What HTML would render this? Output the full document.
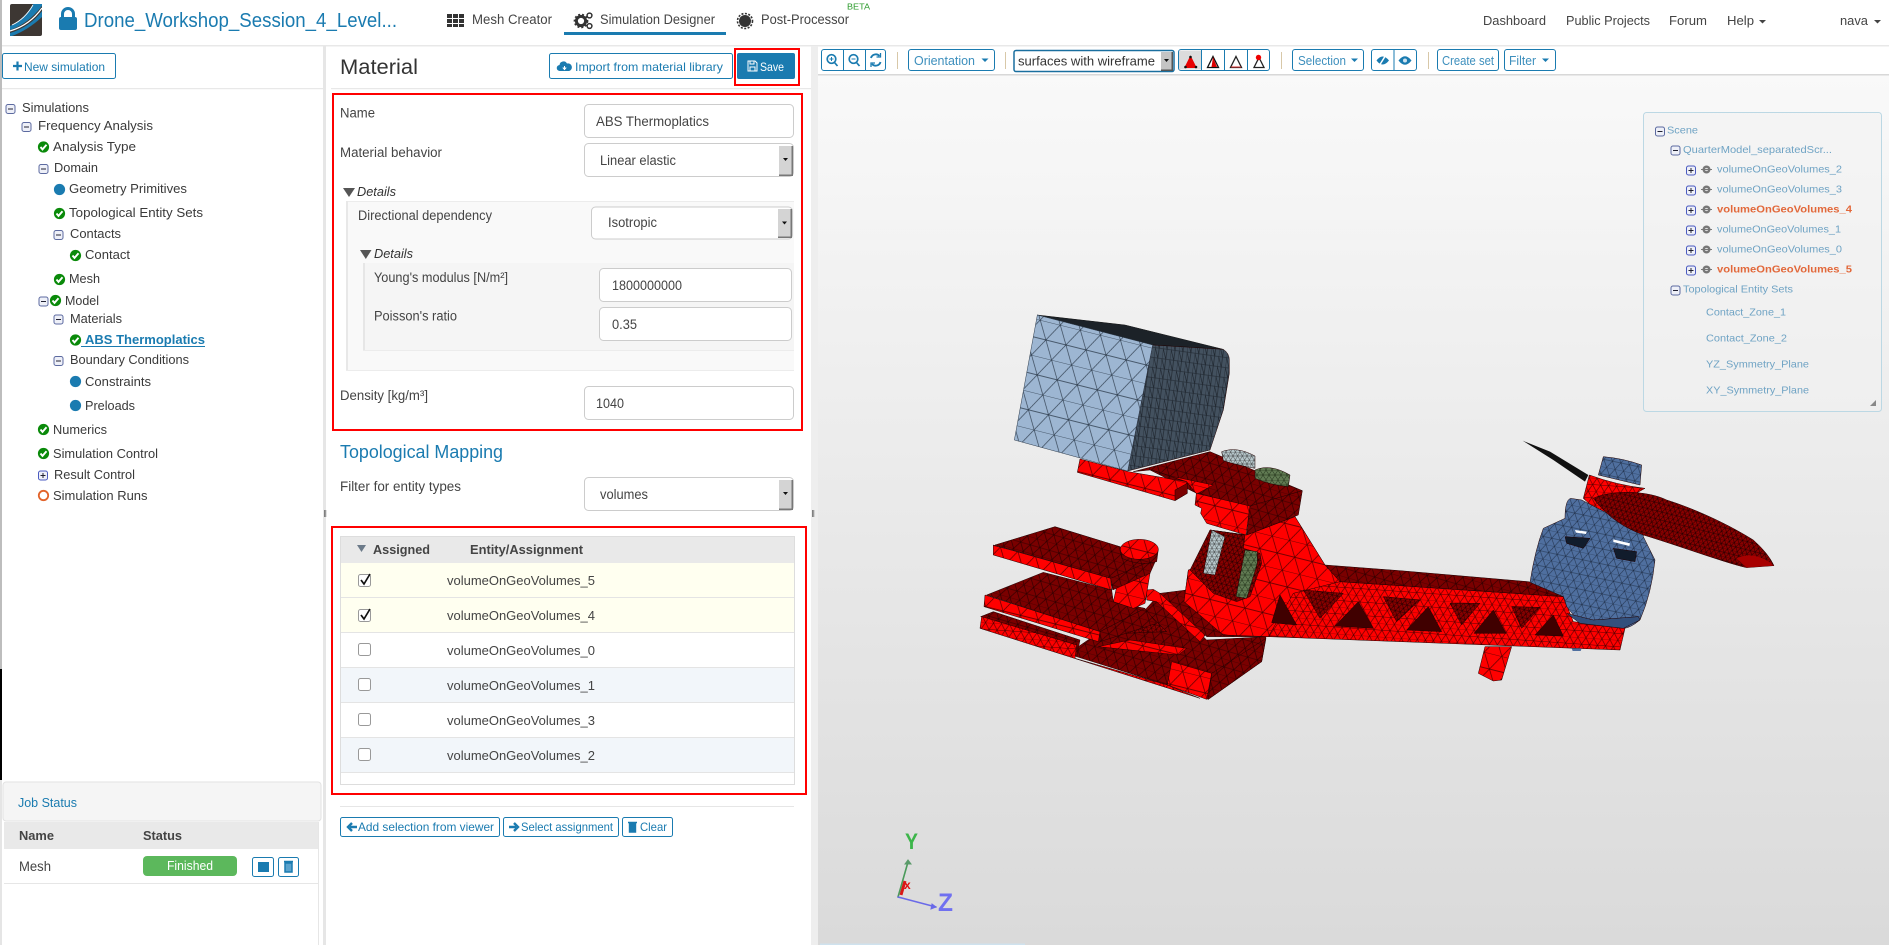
<!DOCTYPE html>
<html lang="en"><head><meta charset="utf-8"><title>Material - Simulation Designer</title>
<style>
html,body{margin:0;padding:0;background:#fff;overflow:hidden}
svg{display:block}
text{font-family:"Liberation Sans",sans-serif;fill:#444;white-space:pre}
.b{fill:#1a7bb0}.lb{font-size:13.5px}.tr{font-size:13px;fill:#3a3a3a}
.btn{font-size:12px;fill:#1a7bb0}.tb{font-size:12.5px;fill:#3d8fbd}
.sc{font-size:10.5px;fill:#6fa3c4}.or{font-size:10.5px;fill:#e2683a;font-weight:bold}
.hd{font-weight:bold;font-size:13px;fill:#444}
.inp{fill:#fff;stroke:#ccc;stroke-width:1}
.bb{fill:#fff;stroke:#1a7bb0;stroke-width:1}
.red{fill:none;stroke:#f00;stroke-width:2}
</style></head><body>
<svg xmlns="http://www.w3.org/2000/svg" width="1889" height="945" viewBox="0 0 1889 945">
<defs>
<linearGradient id="vg" x1="0" y1="0" x2="0" y2="1"><stop offset="0" stop-color="#f9f9f9"/><stop offset="1" stop-color="#dadada"/></linearGradient>
<pattern id="mr" width="54" height="92" patternUnits="userSpaceOnUse" patternTransform="rotate(14)"><rect width="54" height="92" fill="#f00"/><path d="M0 0H54M0 46H54M0 0L27 46L54 0M0 92L27 46L54 92" stroke="#4a0000" stroke-width="2" fill="none"/></pattern>
<pattern id="mf" width="24" height="40" patternUnits="userSpaceOnUse" patternTransform="rotate(4)"><rect width="24" height="40" fill="#f00"/><path d="M0 0H24M0 20H24M0 0L12 20L24 0M0 40L12 20L24 40" stroke="#500000" stroke-width="1.800" fill="none"/></pattern>
<pattern id="md" width="30" height="48" patternUnits="userSpaceOnUse" patternTransform="rotate(16)"><rect width="30" height="48" fill="#7a0000"/><path d="M0 0H30M0 24H30M0 0L15 24L30 0M0 48L15 24L30 48" stroke="#2a0000" stroke-width="1.800" fill="none"/></pattern>
<pattern id="mdf" width="15" height="24" patternUnits="userSpaceOnUse" patternTransform="rotate(14)"><rect width="15" height="24" fill="#8a0000"/><path d="M0 0H15M0 12H15M0 0L7.500 12L15 0M0 24L7.500 12L15 24" stroke="#200000" stroke-width="1.600" fill="none"/></pattern>
<pattern id="bl" width="62" height="108" patternUnits="userSpaceOnUse" patternTransform="rotate(14)"><rect width="62" height="108" fill="#9db6d2"/><path d="M0 0H62M0 54H62M0 0L31 54L62 0M0 108L31 54L62 108" stroke="#2c3a4a" stroke-width="2" fill="none"/></pattern>
<pattern id="sl" width="24" height="30" patternUnits="userSpaceOnUse" patternTransform="rotate(8)"><rect width="24" height="30" fill="#43515f"/><path d="M0 0H24M0 30H24M0 0V30M12 0V30M0 0L12 30" stroke="#1a2028" stroke-width="1.800" fill="none"/></pattern>
<pattern id="mb" width="26" height="44" patternUnits="userSpaceOnUse" patternTransform="rotate(12)"><rect width="26" height="44" fill="#4f6f9f"/><path d="M0 0H26M0 22H26M0 0L13 22L26 0M0 44L13 22L26 44" stroke="#1d2c44" stroke-width="1.500" fill="none"/></pattern>
<pattern id="gy" width="14" height="24" patternUnits="userSpaceOnUse"><rect width="14" height="24" fill="#b6c6ca"/><path d="M0 0H14M0 12H14M0 0L7 12L14 0M0 24L7 12L14 24" stroke="#333" stroke-width="1.400" fill="none"/></pattern>
<pattern id="gn" width="18" height="30" patternUnits="userSpaceOnUse"><rect width="18" height="30" fill="#607a52"/><path d="M0 0H18M0 15H18M0 0L9 15L18 0M0 30L9 15L18 30" stroke="#1c2a14" stroke-width="1.500" fill="none"/></pattern>
<symbol id="chk" overflow="visible"><circle r="5.600" fill="#0a8a0a"/><path d="M-3 0L-1 2.400L3-2.200" stroke="#fff" stroke-width="1.900" fill="none"/></symbol>
<symbol id="mn" overflow="visible"><rect x="-4.500" y="-4.500" width="9" height="9" rx="2" fill="#eef0f8" stroke="#5c6aa0"/><path d="M-2.500 0H2.500" stroke="#223" stroke-width="1"/></symbol>
<symbol id="pl" overflow="visible"><rect x="-4.500" y="-4.500" width="9" height="9" rx="2" fill="#eef0f8" stroke="#4a5ac0"/><path d="M-2.500 0H2.500M0-2.500V2.500" stroke="#223" stroke-width="1"/></symbol>
<symbol id="eye" overflow="visible"><circle r="4" fill="#777"/><circle r="1.600" fill="#ddd"/><path d="M-5.500 0H5.500" stroke="#777"/></symbol>
</defs>

<!-- page chrome -->
<rect width="1889" height="945" fill="#fff"/>
<rect x="0" y="0" width="2" height="669" fill="#bdbdbd"/><rect x="0" y="669" width="2" height="111" fill="#000"/><rect x="0" y="780" width="2" height="165" fill="#e5e5e5"/>
<rect x="2" y="45" width="1887" height="1.500" fill="#e8e8e8"/>
<rect x="323" y="46" width="3" height="899" fill="#e6e6e6"/>
<rect x="811" y="46" width="7" height="899" fill="#eeeeee"/>
<rect x="324" y="510" width=".8" height="7" fill="#666"/><rect x="325.400" y="510" width=".8" height="7" fill="#666"/>
<rect x="812" y="510" width=".8" height="7" fill="#666"/><rect x="813.400" y="510" width=".8" height="7" fill="#666"/>
<rect x="2" y="88" width="321" height="1.200" fill="#e8e8e8"/><rect x="331" y="88" width="480" height="1.200" fill="#e8e8e8"/>

<!-- header -->
<rect x="10" y="4" width="32" height="32" rx="2" fill="#3d3733"/>
<path d="M10 26Q24 20 33 4H42V6Q28 24 10 30Z" fill="#1a7bb0"/>
<path d="M10 33Q30 27 42 11V17Q28 30 12 36H10Z" fill="#1a7bb0"/>
<path d="M10 31Q30 25 42 8" stroke="#fff" stroke-width="1.200" fill="none"/>
<path d="M12 25Q25 19 33 5" stroke="#fff" stroke-width=".8" fill="none"/>
<rect x="59" y="17" width="18" height="13" rx="2" fill="#1a7bb0"/><path d="M62.500 18V14a5.500 5.500 0 0 1 11 0V18" stroke="#1a7bb0" stroke-width="3" fill="none"/>
<text class="b" x="84" y="27" font-size="20" textLength="313" lengthAdjust="spacingAndGlyphs">Drone_Workshop_Session_4_Level...</text>
<g fill="#333"><path d="M447 14h5v4h-5zM453 14h5v4h-5zM459 14h5v4h-5zM447 19h5v4h-5zM453 19h5v4h-5zM459 19h5v4h-5zM447 24h5v3h-5zM453 24h5v3h-5zM459 24h5v3h-5z"/></g>
<text x="472" y="24" font-size="13.500" textLength="80" lengthAdjust="spacingAndGlyphs">Mesh Creator</text>
<circle cx="581" cy="21" r="4.600" fill="none" stroke="#333" stroke-width="3"/><circle cx="581" cy="21" r="6.600" fill="none" stroke="#333" stroke-width="1.500" stroke-dasharray="2 2"/>
<circle cx="589.500" cy="15.500" r="2.400" fill="none" stroke="#333" stroke-width="1.500"/><circle cx="589.500" cy="26" r="2.400" fill="none" stroke="#333" stroke-width="1.500"/>
<text x="600" y="24" font-size="13.500" textLength="115" lengthAdjust="spacingAndGlyphs">Simulation Designer</text>
<rect x="564" y="32" width="162" height="3" fill="#1a7bb0"/>
<circle cx="745" cy="21" r="6" fill="#333"/><circle cx="745" cy="21" r="7.500" fill="none" stroke="#333" stroke-width="1.600" stroke-dasharray="2 1.500"/>
<text x="761" y="24" font-size="13.500" textLength="88" lengthAdjust="spacingAndGlyphs">Post-Processor</text>
<text x="847" y="9.500" font-size="8.500" style="fill:#2a9a2a" textLength="23" lengthAdjust="spacingAndGlyphs">BETA</text>
<text x="1483" y="25" font-size="13" textLength="63" lengthAdjust="spacingAndGlyphs">Dashboard</text>
<text x="1566" y="25" font-size="13" textLength="84" lengthAdjust="spacingAndGlyphs">Public Projects</text>
<text x="1669" y="25" font-size="13" textLength="38" lengthAdjust="spacingAndGlyphs">Forum</text>
<text x="1727" y="25" font-size="13" textLength="27" lengthAdjust="spacingAndGlyphs">Help</text>
<path d="M1759 20h7l-3.500 3.500z" fill="#444"/>
<text x="1840" y="25" font-size="13" textLength="28" lengthAdjust="spacingAndGlyphs">nava</text>
<path d="M1874 20h7l-3.500 3.500z" fill="#444"/>

<!-- left panel -->
<rect class="bb" x="2.500" y="53.500" width="113" height="25" rx="2"/>
<path d="M13 66h9M17.500 61.500v9" stroke="#1a7bb0" stroke-width="2.200"/>
<text class="btn" x="24" y="71" textLength="81" lengthAdjust="spacingAndGlyphs">New simulation</text>

<use href="#mn" x="10.500" y="109"/><text class="tr" x="22" y="112" textLength="67" lengthAdjust="spacingAndGlyphs">Simulations</text>
<use href="#mn" x="26.500" y="127"/><text class="tr" x="38" y="130" textLength="115" lengthAdjust="spacingAndGlyphs">Frequency Analysis</text>
<use href="#chk" x="43.500" y="147"/><text class="tr" x="53" y="151" textLength="83" lengthAdjust="spacingAndGlyphs">Analysis Type</text>
<use href="#mn" x="43.500" y="169"/><text class="tr" x="54" y="172" textLength="44" lengthAdjust="spacingAndGlyphs">Domain</text>
<circle cx="59.500" cy="189.500" r="5.600" fill="#1a7bb0"/><text class="tr" x="69" y="193" textLength="118" lengthAdjust="spacingAndGlyphs">Geometry Primitives</text>
<use href="#chk" x="59.500" y="213.500"/><text class="tr" x="69" y="217" textLength="134" lengthAdjust="spacingAndGlyphs">Topological Entity Sets</text>
<use href="#mn" x="58.500" y="235"/><text class="tr" x="70" y="238" textLength="51" lengthAdjust="spacingAndGlyphs">Contacts</text>
<use href="#chk" x="75.500" y="255.500"/><text class="tr" x="85" y="259" textLength="45" lengthAdjust="spacingAndGlyphs">Contact</text>
<use href="#chk" x="59.500" y="279.500"/><text class="tr" x="69" y="283" textLength="31" lengthAdjust="spacingAndGlyphs">Mesh</text>
<use href="#mn" x="43.500" y="301.500"/><use href="#chk" x="55.500" y="300.500"/><text class="tr" x="65" y="305" textLength="34" lengthAdjust="spacingAndGlyphs">Model</text>
<use href="#mn" x="58.500" y="319.500"/><text class="tr" x="70" y="323" textLength="52" lengthAdjust="spacingAndGlyphs">Materials</text>
<use href="#chk" x="75.500" y="340"/><text x="85" y="344" font-size="13" font-weight="bold" style="fill:#1a7bb0" textLength="120" lengthAdjust="spacingAndGlyphs">ABS Thermoplatics</text><rect x="81" y="346" width="124" height="1" fill="#1a7bb0"/>
<use href="#mn" x="58.500" y="361"/><text class="tr" x="70" y="364" textLength="119" lengthAdjust="spacingAndGlyphs">Boundary Conditions</text>
<circle cx="75.500" cy="381.500" r="5.600" fill="#1a7bb0"/><text class="tr" x="85" y="386" textLength="66" lengthAdjust="spacingAndGlyphs">Constraints</text>
<circle cx="75.500" cy="405.500" r="5.600" fill="#1a7bb0"/><text class="tr" x="85" y="410" textLength="50" lengthAdjust="spacingAndGlyphs">Preloads</text>
<use href="#chk" x="43.500" y="429.500"/><text class="tr" x="53" y="434" textLength="54" lengthAdjust="spacingAndGlyphs">Numerics</text>
<use href="#chk" x="43.500" y="453.500"/><text class="tr" x="53" y="458" textLength="105" lengthAdjust="spacingAndGlyphs">Simulation Control</text>
<use href="#pl" x="43" y="475.500"/><text class="tr" x="54" y="479" textLength="81" lengthAdjust="spacingAndGlyphs">Result Control</text>
<circle cx="43.500" cy="495.500" r="4.700" fill="none" stroke="#e2632a" stroke-width="1.800"/><text class="tr" x="53" y="500" textLength="94.500" lengthAdjust="spacingAndGlyphs">Simulation Runs</text>

<!-- job status -->
<rect x="3" y="782" width="318" height="39" rx="3" fill="#f5f5f5" stroke="#e2e2e2"/>
<text class="b" x="18" y="807" font-size="13" textLength="59" lengthAdjust="spacingAndGlyphs">Job Status</text>
<rect x="4" y="822" width="314" height="27" fill="#e9e9e9"/>
<text class="hd" x="19" y="840" textLength="35" lengthAdjust="spacingAndGlyphs">Name</text>
<text class="hd" x="143" y="840" textLength="39" lengthAdjust="spacingAndGlyphs">Status</text>
<text x="19" y="871" font-size="13.500" textLength="32" lengthAdjust="spacingAndGlyphs">Mesh</text>
<rect x="4" y="883" width="314" height="1" fill="#e6e6e6"/><rect x="318" y="822" width="1" height="123" fill="#e6e6e6"/>
<rect x="143" y="856" width="94" height="20" rx="4" fill="#5cb85c"/>
<text x="167" y="870" font-size="12.500" style="fill:#fff" textLength="46" lengthAdjust="spacingAndGlyphs">Finished</text>
<rect class="bb" x="252.500" y="857.500" width="21" height="19" rx="2"/><rect x="258" y="862" width="11" height="10" fill="#1a7bb0"/>
<rect class="bb" x="278.500" y="857.500" width="20" height="19" rx="2"/>
<path d="M285 863h7v9h-7zM284 861.500h9" stroke="#1a7bb0" stroke-width="1.500" fill="#5aa2cc"/>

<!-- middle: material -->
<text x="340" y="74" font-size="21" style="fill:#333" textLength="78" lengthAdjust="spacingAndGlyphs">Material</text>
<rect class="bb" x="549.500" y="53.500" width="183" height="25" rx="2"/>
<path d="M560 71a3 3 0 0 1-.5-6 4 4 0 0 1 7.500-1.500 3.500 3.500 0 0 1 2 7.500z" fill="#1a7bb0"/><path d="M564.500 70v-4M562.800 67.500l1.700 2 1.700-2" stroke="#fff" fill="none"/>
<text class="btn" x="575" y="71" textLength="148" lengthAdjust="spacingAndGlyphs">Import from material library</text>
<rect x="737" y="53" width="58" height="26" rx="2" fill="#1a7bb0"/>
<path d="M748 61h7l2 2v8h-9zM750 61v3h4v-3M750 71v-4h5v4" fill="none" stroke="#fff" stroke-width="1"/>
<text x="760" y="71" font-size="12" style="fill:#fff" textLength="24" lengthAdjust="spacingAndGlyphs">Save</text>
<rect class="red" x="735" y="49" width="64" height="36"/>
<rect class="red" x="333" y="94" width="469" height="336"/>

<text class="lb" x="340" y="117.500" textLength="35" lengthAdjust="spacingAndGlyphs">Name</text>
<rect class="inp" x="584.500" y="104.500" width="209" height="33" rx="4"/>
<text class="lb" x="596" y="126" textLength="113" lengthAdjust="spacingAndGlyphs">ABS Thermoplatics</text>
<text class="lb" x="340" y="157" textLength="102" lengthAdjust="spacingAndGlyphs">Material behavior</text>
<rect class="inp" x="584.500" y="143.500" width="209" height="33" rx="4"/>
<rect x="779" y="146" width="14" height="30" fill="#d4d4d4"/><rect x="779" y="174.500" width="14" height="1.500" fill="#777"/><rect x="791.500" y="146" width="1.500" height="30" fill="#777"/><path d="M783 158h5l-2.500 3z" fill="#111"/>
<text class="lb" x="600" y="165" textLength="76" lengthAdjust="spacingAndGlyphs">Linear elastic</text>
<path d="M343 188h12l-6 9z" fill="#555"/>
<text x="357" y="196" font-size="13" font-style="italic" style="fill:#333" textLength="39" lengthAdjust="spacingAndGlyphs">Details</text>
<rect x="346" y="201" width="448" height="170" fill="#f9f9f9"/><rect x="346" y="201" width="448" height="1" fill="#ececec"/><rect x="346" y="201" width="2" height="170" fill="#e8e8e8"/><rect x="346" y="370" width="448" height="1" fill="#ececec"/>
<text class="lb" x="358" y="220" textLength="134" lengthAdjust="spacingAndGlyphs">Directional dependency</text>
<rect class="inp" x="591.500" y="207" width="201" height="32" rx="4"/>
<rect x="778" y="209" width="14" height="29" fill="#d4d4d4"/><rect x="778" y="236.500" width="14" height="1.500" fill="#777"/><rect x="790.500" y="209" width="1.500" height="29" fill="#777"/><path d="M782 221.500h5l-2.500 3z" fill="#111"/>
<text class="lb" x="608" y="227" textLength="49" lengthAdjust="spacingAndGlyphs">Isotropic</text>
<path d="M360 250h11.500l-5.700 9z" fill="#555"/>
<text x="374" y="258" font-size="13" font-style="italic" style="fill:#333" textLength="39" lengthAdjust="spacingAndGlyphs">Details</text>
<rect x="363" y="263" width="431" height="88" fill="#f5f5f5"/><rect x="363" y="263" width="2" height="88" fill="#e6e6e6"/><rect x="363" y="350" width="431" height="1" fill="#ececec"/>
<text class="lb" x="374" y="282" textLength="134" lengthAdjust="spacingAndGlyphs">Young's modulus [N/m²]</text>
<rect class="inp" x="599.500" y="268.500" width="192" height="33" rx="4"/>
<text class="lb" x="612" y="290" textLength="70" lengthAdjust="spacingAndGlyphs">1800000000</text>
<text class="lb" x="374" y="320.500" textLength="83" lengthAdjust="spacingAndGlyphs">Poisson's ratio</text>
<rect class="inp" x="599.500" y="307.500" width="192" height="33" rx="4"/>
<text class="lb" x="612" y="329" textLength="25" lengthAdjust="spacingAndGlyphs">0.35</text>
<text class="lb" x="340" y="400" textLength="88" lengthAdjust="spacingAndGlyphs">Density [kg/m³]</text>
<rect class="inp" x="584.500" y="386.500" width="209" height="33" rx="4"/>
<text class="lb" x="596" y="408" textLength="28" lengthAdjust="spacingAndGlyphs">1040</text>

<text class="b" x="340" y="458" font-size="18" textLength="163" lengthAdjust="spacingAndGlyphs">Topological Mapping</text>
<text class="lb" x="340" y="491" textLength="121" lengthAdjust="spacingAndGlyphs">Filter for entity types</text>
<rect class="inp" x="584.500" y="477.500" width="209" height="33" rx="4"/>
<rect x="779" y="480" width="14" height="30" fill="#d4d4d4"/><rect x="779" y="508.500" width="14" height="1.500" fill="#777"/><rect x="791.500" y="480" width="1.500" height="30" fill="#777"/><path d="M783 492h5l-2.500 3z" fill="#111"/>
<text class="lb" x="600" y="499" textLength="48" lengthAdjust="spacingAndGlyphs">volumes</text>

<!-- table -->
<rect class="red" x="332" y="527" width="474" height="267"/>
<rect x="340.500" y="536.500" width="454" height="248" fill="#fff" stroke="#ddd"/>
<rect x="341" y="537" width="453" height="26" fill="#e9e9e9"/>
<path d="M357 545h9l-4.500 7z" fill="#6c7a89"/>
<text class="hd" x="373" y="554" textLength="57" lengthAdjust="spacingAndGlyphs">Assigned</text>
<text class="hd" x="470" y="554" textLength="113" lengthAdjust="spacingAndGlyphs">Entity/Assignment</text>
<rect x="341" y="563" width="453" height="34" fill="#fffff0"/><rect x="341" y="597" width="453" height="1" fill="#e4e4e4"/>
<rect x="341" y="598" width="453" height="34" fill="#fffff0"/><rect x="341" y="632" width="453" height="1" fill="#e4e4e4"/>
<rect x="341" y="667" width="453" height="1" fill="#e4e4e4"/>
<rect x="341" y="668" width="453" height="34" fill="#f2f6fa"/><rect x="341" y="702" width="453" height="1" fill="#e4e4e4"/>
<rect x="341" y="737" width="453" height="1" fill="#e4e4e4"/>
<rect x="341" y="738" width="453" height="34" fill="#f2f6fa"/><rect x="341" y="772" width="453" height="1" fill="#e4e4e4"/>
<g fill="#fff" stroke="#999"><rect x="358.500" y="574.500" width="12" height="12" rx="2"/><rect x="358.500" y="609.500" width="12" height="12" rx="2"/><rect x="358.500" y="643.500" width="12" height="12" rx="2"/><rect x="358.500" y="678.500" width="12" height="12" rx="2"/><rect x="358.500" y="713.500" width="12" height="12" rx="2"/><rect x="358.500" y="748.500" width="12" height="12" rx="2"/></g>
<path d="M361 580l3 4 6-10M361 615l3 4 6-10" fill="none" stroke="#111" stroke-width="1.700"/>
<g font-size="13"><text x="447" y="585" textLength="148" lengthAdjust="spacingAndGlyphs">volumeOnGeoVolumes_5</text>
<text x="447" y="620" textLength="148" lengthAdjust="spacingAndGlyphs">volumeOnGeoVolumes_4</text>
<text x="447" y="655" textLength="148" lengthAdjust="spacingAndGlyphs">volumeOnGeoVolumes_0</text>
<text x="447" y="690" textLength="148" lengthAdjust="spacingAndGlyphs">volumeOnGeoVolumes_1</text>
<text x="447" y="725" textLength="148" lengthAdjust="spacingAndGlyphs">volumeOnGeoVolumes_3</text>
<text x="447" y="760" textLength="148" lengthAdjust="spacingAndGlyphs">volumeOnGeoVolumes_2</text></g>
<rect x="340" y="806" width="454" height="1" fill="#e6e6e6"/>
<rect class="bb" x="340.500" y="817.500" width="159" height="19" rx="2"/>
<path d="M357 827h-7M352 823l-4 4 4 4" stroke="#1a7bb0" stroke-width="2.400" fill="none"/>
<text class="btn" x="358" y="831" textLength="136" lengthAdjust="spacingAndGlyphs">Add selection from viewer</text>
<rect class="bb" x="503.500" y="817.500" width="115" height="19" rx="2"/>
<path d="M509 827h7M514 823l4 4-4 4" stroke="#1a7bb0" stroke-width="2.400" fill="none"/>
<text class="btn" x="521" y="831" textLength="92" lengthAdjust="spacingAndGlyphs">Select assignment</text>
<rect class="bb" x="622.500" y="817.500" width="50" height="19" rx="2"/>
<path d="M629.500 824h6v8h-6zM628 822.500h9" stroke="#1a7bb0" stroke-width="1.400" fill="#1a7bb0"/>
<text class="btn" x="640" y="831" textLength="27" lengthAdjust="spacingAndGlyphs">Clear</text>

<!-- viewer toolbar -->
<rect x="818" y="74" width="1071" height="871" fill="url(#vg)"/>
<rect x="818" y="74" width="1071" height="1.500" fill="#d8d8d8"/>
<rect x="820" y="943.500" width="205" height="1.500" fill="#cfe2ee"/>
<rect class="bb" x="821.500" y="49.500" width="64" height="21" rx="2.500"/><path d="M843.500 50v20M865.500 50v20" stroke="#1a7bb0"/>
<g fill="none" stroke="#1a7bb0" stroke-width="1.700"><circle cx="831.500" cy="59" r="4.300"/><path d="M834.500 62.500l3 3.500"/><path d="M829.500 59h4M831.500 57v4" stroke-width="1"/>
<circle cx="853.500" cy="59" r="4.300"/><path d="M856.500 62.500l3 3.500"/><path d="M851.500 59h4" stroke-width="1"/>
<path d="M871 58a5 5 0 0 1 8.500-2M880.500 62a5 5 0 0 1-8.500 2" stroke-width="1.900"/><path d="M880.500 53v4h-4M871 67v-4h4" stroke-width="1.300"/></g>
<rect x="897" y="52" width="1" height="17" fill="#d8c8a8"/>
<rect class="bb" x="908.500" y="49.500" width="86" height="21" rx="2.500"/>
<text class="tb" x="914" y="65" textLength="61" lengthAdjust="spacingAndGlyphs">Orientation</text><path d="M981.500 58.500h7l-3.500 3.500z" fill="#1a7bb0"/>
<rect x="1005" y="52" width="1" height="17" fill="#d8c8a8"/>
<rect x="1014" y="50.500" width="160" height="21" rx="2" fill="#fff" stroke="#1a6f9f" stroke-width="1.500"/>
<rect x="1161" y="52" width="12" height="19" fill="#c4c4c4"/><rect x="1161" y="69.500" width="12" height="1.500" fill="#555"/><rect x="1171.500" y="52" width="1.500" height="19" fill="#555"/><path d="M1164 59h5l-2.500 3z" fill="#111"/>
<text x="1018" y="65.500" font-size="13" style="fill:#333" textLength="137" lengthAdjust="spacingAndGlyphs">surfaces with wireframe</text>
<rect class="bb" x="1178.500" y="49.500" width="91" height="21" rx="2.500"/><path d="M1179 50.500h22v19h-22z" fill="#dcdcdc"/><path d="M1201.500 50v20M1224.500 50v20M1247.500 50v20" stroke="#1a7bb0"/>
<path d="M1190.500 56.500l5.500 11h-11z" fill="#e80000" stroke="#e80000"/><g fill="#111"><circle cx="1190.500" cy="57" r="1.300"/><circle cx="1185.500" cy="67" r="1.300"/><circle cx="1196" cy="67" r="1.300"/></g>
<path d="M1213 56.500l5.500 11h-11z" fill="#fff" stroke="#111" stroke-width="1.300"/><path d="M1213 57l-1.500 10h5.500z" fill="#d00"/>
<path d="M1236 56.500l5.500 11h-11z" fill="#fff" stroke="#222" stroke-width="1.300"/><path d="M1231 67h10" stroke="#d33"/>
<path d="M1259 57.500l5 10h-10z" fill="#fff" stroke="#222" stroke-width="1.300"/><circle cx="1258.500" cy="57.500" r="2.700" fill="#e00"/>
<rect x="1281" y="52" width="1" height="17" fill="#d8c8a8"/>
<rect class="bb" x="1292.500" y="49.500" width="71" height="21" rx="2.500"/>
<text class="tb" x="1298" y="65" textLength="48" lengthAdjust="spacingAndGlyphs">Selection</text><path d="M1351 58.500h7l-3.500 3.500z" fill="#1a7bb0"/>
<rect class="bb" x="1371.500" y="49.500" width="45" height="21" rx="2.500"/><path d="M1394 50v20" stroke="#1a7bb0"/>
<path d="M1376.500 60.500q6-8 12.500 0q-6.500 8-12.500 0" fill="#1a7bb0"/><path d="M1379 66l7.500-12" stroke="#fff" stroke-width="1.500"/>
<path d="M1398.500 60.500q6.500-8.500 13 0q-6.500 8.500-13 0" fill="#1a7bb0"/><circle cx="1405" cy="60.500" r="2" fill="#cfe3ef"/>
<rect x="1428" y="52" width="1" height="17" fill="#d8c8a8"/>
<rect class="bb" x="1437.500" y="49.500" width="61" height="21" rx="2.500"/>
<text class="tb" x="1442" y="65" textLength="52" lengthAdjust="spacingAndGlyphs">Create set</text>
<rect class="bb" x="1504.500" y="49.500" width="51" height="21" rx="2.500"/>
<text class="tb" x="1509" y="65" textLength="27" lengthAdjust="spacingAndGlyphs">Filter</text><path d="M1542 58.500h7l-3.500 3.500z" fill="#1a7bb0"/>

<!-- 3D model (coordinates at 3x, origin 960,300) -->
<g transform="translate(960 300) scale(.33333)" stroke="#200000" stroke-width="1.500">
<!-- bottom bracket -->
<path d="M355 1040L420 995 555 930 600 880 740 1020 918 1010 905 1085 745 1198 622 1155 350 1070Z" fill="url(#md)"/>
<path d="M600 880L580 868 560 870 560 900 590 905 720 1025 740 1000Z" fill="url(#mr)"/>
<path d="M600 880L680 870 920 1010 740 1010Z" fill="url(#md)"/>
<path d="M415 1040L510 1020 680 1045 655 1065Z" fill="url(#mr)"/>
<path d="M490 1000L570 945 620 995Z" fill="url(#mdf)"/>
<path d="M62 950L100 935 360 1020 350 1070Z" fill="url(#md)"/>
<path d="M60 985L65 950 350 1035 345 1075 622 1155 720 1195Z" fill="url(#mf)"/>
<path d="M635 1085L755 1120 740 1198 622 1155Z" fill="url(#mr)"/>
<path d="M755 1120L918 1015 905 1085 745 1198Z" fill="url(#md)"/>
<!-- mid plate -->
<path d="M80 885L250 817 455 870 460 905 555 925 420 995Z" fill="url(#md)"/>
<path d="M75 885L420 995 415 1025 72 920Z" fill="url(#mr)"/>
<path d="M420 995L555 925 590 970 420 1025Z" fill="url(#md)"/>
<!-- cylinder -->
<path d="M470 860L575 790 555 910 520 925 460 905Z" fill="url(#mr)"/>
<!-- upper plate -->
<path d="M105 735L285 680 480 740 575 790 452 835Z" fill="url(#md)"/>
<path d="M100 735L452 835 455 870 100 765Z" fill="url(#mr)"/>
<path d="M452 835L590 775 570 820 458 870Z" fill="url(#md)"/>
<path d="M481 748L595 748 590 785Q540 800 485 775Z" fill="url(#md)"/>
<ellipse cx="538" cy="748" rx="57" ry="30" fill="url(#mr)"/>
<!-- main body -->
<path d="M860 705L1005 650 1095 795 1140 845 1810 890 1840 965 1995 985 1980 1050 925 1010 790 1005 672 905 685 810 735 795 750 690Z" fill="url(#mf)"/>
<path d="M860 705L1005 650 1095 795 1140 845 1000 880 925 1010 790 1005 672 905 685 810 735 795 750 690Z" fill="url(#mr)"/>
<path d="M690 810L750 690 855 705 850 745 900 760 905 790 870 890 830 905 760 880Z" fill="url(#mdf)"/>
<path d="M730 820L755 690 795 710 765 825Z" fill="url(#gy)"/>
<path d="M828 890L855 750 892 755 892 790 860 895Z" fill="url(#gn)"/>
<!-- arm top -->
<path d="M1095 795L1320 812 1705 845 1765 860 1810 890 1320 857 1140 845Z" fill="url(#md)"/>
<!-- arm holes -->
<g fill="url(#mdf)"><path d="M1030 870L1150 880 1080 955Z"/><path d="M1270 890L1380 900 1310 965Z"/><path d="M1470 910L1560 910 1505 975Z"/><path d="M1655 920L1740 922 1685 985Z"/></g>
<g fill="#400000"><path d="M960 885L1010 975 935 968Z"/><path d="M1195 905L1240 985 1125 978Z"/><path d="M1405 920L1445 995 1340 990Z"/><path d="M1600 930L1638 1000 1542 1000Z"/><path d="M1780 945L1810 1008 1725 1005Z"/></g>
<!-- peg -->
<path d="M1575 1040L1655 1040 1625 1140 1600 1143 1555 1120Z" fill="url(#mr)"/>
<!-- motor -->
<path d="M1915 525L1930 470Q1990 475 2045 495L2040 555Z" fill="url(#mb)"/>
<path d="M1870 595L1888 525Q1970 555 2055 565L1920 640Z" fill="url(#mf)"/>
<path d="M1750 685L1815 655Q1815 600 1832 595L1865 600 2050 695 2050 710 2085 780Q2075 880 2040 960 2010 985 1990 985L1860 970 1820 920 1810 890 1710 847Q1725 750 1750 685Z" fill="url(#mb)"/>
<path d="M1815 710L1890 715 1870 745 1820 730Z" fill="#111c2c"/><path d="M1960 745L2030 755 2025 785 1970 775Z" fill="#111c2c"/>
<path d="M1845 690L1880 695 1878 702 1848 698Z" fill="#fff" stroke="none"/><path d="M1960 718L2010 730 2008 738 1960 726Z" fill="#fff" stroke="none"/>
<path d="M1820 940L1900 960 2035 950 2040 960 1990 985 1860 970Z" fill="#33507c"/>
<path d="M1688 422L1770 455 1885 525 1875 545 1780 480Z" fill="#111" stroke="none"/>
<path d="M1900 595C1950 570 2060 570 2120 600C2200 625 2300 670 2380 720Q2425 760 2442 797L2360 803C2300 790 2150 735 2050 705C2000 685 1950 660 1900 595Z" fill="url(#mdf)"/>
<path d="M2330 775Q2385 750 2442 797L2360 803Z" fill="#a80000" stroke="none"/>
<path d="M1835 1045L1865 1045 1862 1053 1838 1053Z" fill="#4f6f9f" stroke="none"/>
<!-- upper bracket -->
<path d="M520 515L750 455 1027 572 870 620 710 580 570 510Z" fill="url(#md)"/>
<path d="M360 477L505 515 680 545 682 580 645 602 352 517Z" fill="url(#mr)"/>
<path d="M645 570L682 550 682 580 645 602Z" fill="#7a0000"/>
<path d="M575 510L640 530 760 555 710 582 680 545Z" fill="url(#mr)"/>
<path d="M785 455Q830 438 885 468L885 505Q830 495 790 482Z" fill="url(#gy)"/>
<path d="M885 510Q930 490 990 525L985 560Q930 555 885 535Z" fill="url(#gn)"/>
<path d="M709 580L870 618 858 705 740 670 722 640 725 625 705 615Z" fill="url(#mr)"/>
<path d="M870 618L1027 572 1015 645 860 705Z" fill="url(#md)"/>
<!-- box -->
<path d="M232 45L495 75 790 148 578 135Z" fill="#1c2228" stroke="#111"/>
<path d="M578 135L790 148Q808 160 808 180V220L790 330 750 450 503 513Z" fill="url(#sl)"/>
<path d="M232 45L578 135 503 513 163 420Z" fill="url(#bl)" stroke="#2c3a4a"/>
</g>

<!-- axes -->
<g fill="none" stroke-linecap="round">
<path d="M898 897L908 862" stroke="#4a9a5a" stroke-width="1.600"/><path d="M905 864l3-4 3 4z" fill="#5a9a6a" stroke="#5a9a6a"/>
<path d="M901 895l4-14" stroke="#d81818" stroke-width="3" stroke-linecap="butt"/>
<path d="M898 897L936 907" stroke="#6a6ae8" stroke-width="1.500"/><path d="M932 904l4 3-5 2z" fill="#6a6ae8" stroke="#6a6ae8"/>
</g>
<text x="905" y="849" font-size="22" font-weight="bold" style="fill:#3cb54a" textLength="13" lengthAdjust="spacingAndGlyphs">Y</text>
<text x="904" y="889" font-size="12" font-weight="bold" style="fill:#e01010">x</text>
<text x="938" y="911" font-size="25" font-weight="bold" style="fill:#7070f0" textLength="15" lengthAdjust="spacingAndGlyphs">Z</text>

<!-- scene panel -->
<rect x="1643.500" y="112.500" width="238" height="299" rx="3" fill="#f2f2f2" fill-opacity=".5" stroke="#bcd8e4"/>
<use href="#mn" x="1660" y="131.500"/><text class="sc" x="1667" y="133.500" textLength="31" lengthAdjust="spacingAndGlyphs">Scene</text>
<use href="#mn" x="1675.500" y="150.500"/><text class="sc" x="1683" y="153" textLength="149" lengthAdjust="spacingAndGlyphs">QuarterModel_separatedScr...</text>
<use href="#pl" x="1691" y="170.500"/><use href="#eye" x="1706.500" y="169.500"/><text class="sc" x="1717" y="172.700" textLength="125" lengthAdjust="spacingAndGlyphs">volumeOnGeoVolumes_2</text>
<use href="#pl" x="1691" y="190.500"/><use href="#eye" x="1706.500" y="189.500"/><text class="sc" x="1717" y="192.700" textLength="125" lengthAdjust="spacingAndGlyphs">volumeOnGeoVolumes_3</text>
<use href="#pl" x="1691" y="210.500"/><use href="#eye" x="1706.500" y="209.500"/><text class="or" x="1717" y="212.700" textLength="135" lengthAdjust="spacingAndGlyphs">volumeOnGeoVolumes_4</text>
<use href="#pl" x="1691" y="230.500"/><use href="#eye" x="1706.500" y="229.500"/><text class="sc" x="1717" y="232.700" textLength="124" lengthAdjust="spacingAndGlyphs">volumeOnGeoVolumes_1</text>
<use href="#pl" x="1691" y="250.500"/><use href="#eye" x="1706.500" y="249.500"/><text class="sc" x="1717" y="252.700" textLength="125" lengthAdjust="spacingAndGlyphs">volumeOnGeoVolumes_0</text>
<use href="#pl" x="1691" y="270.500"/><use href="#eye" x="1706.500" y="269.500"/><text class="or" x="1717" y="272.700" textLength="135" lengthAdjust="spacingAndGlyphs">volumeOnGeoVolumes_5</text>
<use href="#mn" x="1675.500" y="290.500"/><text class="sc" x="1683" y="292.700" textLength="110" lengthAdjust="spacingAndGlyphs">Topological Entity Sets</text>
<text class="sc" x="1706" y="315.700" textLength="80" lengthAdjust="spacingAndGlyphs">Contact_Zone_1</text>
<text class="sc" x="1706" y="341.700" textLength="81" lengthAdjust="spacingAndGlyphs">Contact_Zone_2</text>
<text class="sc" x="1706" y="367.700" textLength="103" lengthAdjust="spacingAndGlyphs">YZ_Symmetry_Plane</text>
<text class="sc" x="1706" y="393.700" textLength="103" lengthAdjust="spacingAndGlyphs">XY_Symmetry_Plane</text>
<path d="M1876 400v6h-6z" fill="#888"/>
</svg>
</body></html>
